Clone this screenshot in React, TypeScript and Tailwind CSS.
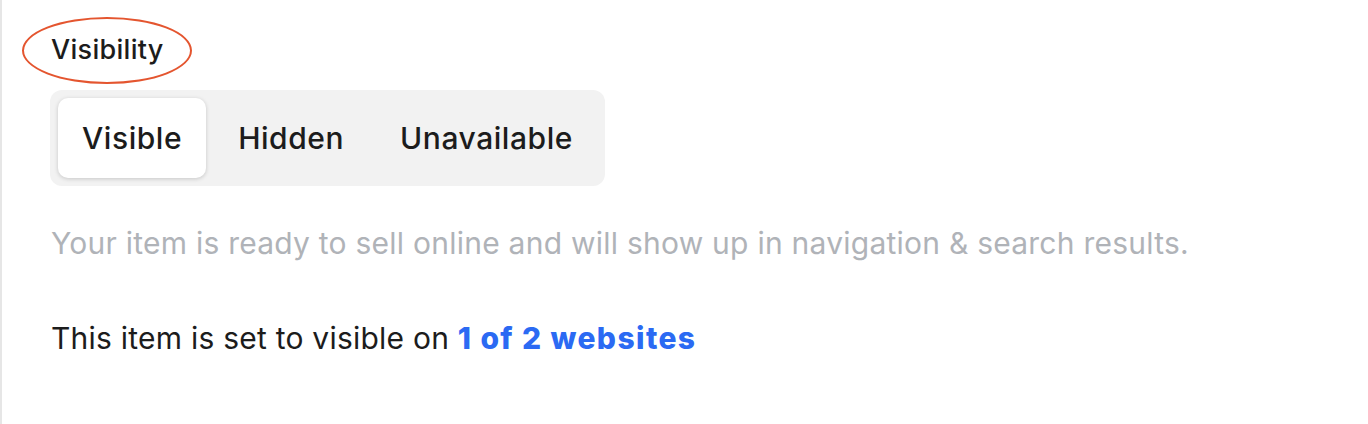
import { useState } from 'react'

const options = ['Visible', 'Hidden', 'Unavailable'] as const

type Option = (typeof options)[number]

export default function App() {
  const [value, setValue] = useState<Option>('Visible')

  return (
    <div className="min-h-[424px] w-full border-l-2 border-[#e6e6e6] bg-white font-['Inter','Liberation_Sans',sans-serif] antialiased">
      <div className="flex flex-col items-start pl-[48px] pt-[34px]">
        <div className="relative ml-[1px]">
          <h2 className="text-[27px] font-medium leading-8 tracking-[0.3px] text-[#1c1c1c]">Visibility</h2>
          <span className="pointer-events-none absolute -left-[29px] -top-[17px] h-[67px] w-[170px] rounded-[50%] border-2 border-[#e4552f]" />
        </div>

        <div className="mt-6 flex gap-2 rounded-xl bg-[#f2f2f2] p-2">
          {options.map((opt) => (
            <button
              key={opt}
              onClick={() => setValue(opt)}
              className={
                opt === value
                  ? 'h-20 rounded-[10px] bg-white px-6 text-[30px] font-medium tracking-[0.55px] text-[#1c1c1c] shadow-[0_1px_4px_rgba(0,0,0,0.18)]'
                  : 'h-20 rounded-[10px] px-6 text-[30px] font-medium tracking-[0.55px] text-[#1c1c1c]'
              }
            >
              {opt}
            </button>
          ))}
        </div>

        <p className="mt-[39px] ml-[1px] text-[30px] leading-9 tracking-[0.24px] text-[#b0b3b8]">
          Your item is ready to sell online and will show up in navigation &amp; search results.
        </p>

        <p className="mt-[59px] ml-[1px] text-[30px] leading-9 tracking-[0.23px] text-[#1c1c1c]">
          This item is set to visible on{' '}
          <a href="#" className="font-extrabold tracking-[1.4px] text-[#2b6af3]">
            1 of 2 websites
          </a>
        </p>
      </div>
    </div>
  )
}
